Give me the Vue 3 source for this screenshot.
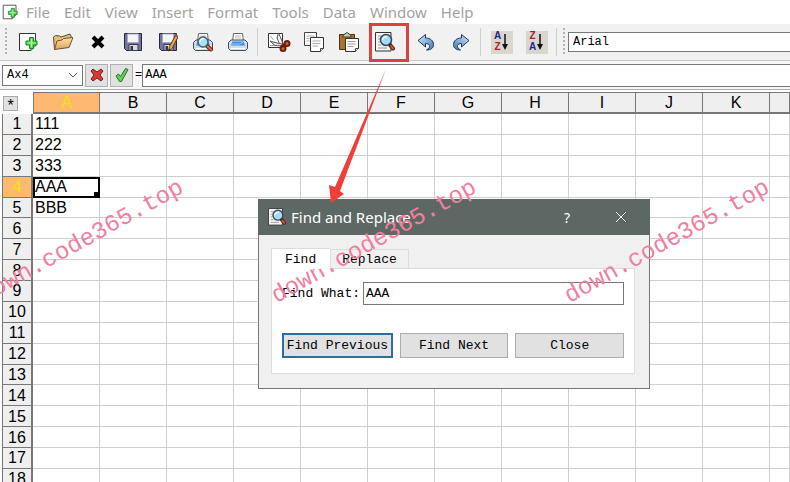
<template>
  <div class="app-window">
    <!-- shared icons -->
    <svg class="icon-defs" aria-hidden="true">
      <defs>
        <linearGradient id="folder-fill" x1="0" y1="0" x2="0" y2="1">
          <stop offset="0" stop-color="#fbe3ae" />
          <stop offset="1" stop-color="#dba558" />
        </linearGradient>
        <linearGradient id="blue-fill" x1="0" y1="0" x2="1" y2="1">
          <stop offset="0" stop-color="#d6e9fa" />
          <stop offset="1" stop-color="#3e78bd" />
        </linearGradient>
      </defs>

      <symbol id="icon-new" viewBox="0 0 20 20">
        <path d="M1.5 1.5h16v12l-4.500 5h-11.500z" fill="#fff" stroke="#333" />
        <path d="M13 18.500v-4.500h4.500" fill="#ddd" stroke="#555" />
        <path d="M11.500 5.500h4v3.500h3.500v4h-3.500v3.500h-4v-3.500h-3.500v-4h3.500z" fill="#5fd45a" stroke="#128a24" />
        <path d="M13.500 7v8M9.500 11h8" stroke="#b5f5a8" />
      </symbol>

      <symbol id="icon-open" viewBox="0 0 20 20">
        <path d="M1.500 17.500l-1-12.500 2-1.500 4 .500 1.500 1 9-3 1 2 .500 3z" fill="#e9bd76" stroke="#5f4a2b" />
        <path d="M1.500 17.500l2.500-8.500 5-1 1.500-1.500 9.500-1-4 10z" fill="url(#folder-fill)" stroke="#6d5430" />
      </symbol>

      <symbol id="icon-delete" viewBox="0 0 20 20">
        <path d="M5 5l10 10M15 5L5 15" stroke="#000" stroke-width="4" />
      </symbol>

      <symbol id="icon-save" viewBox="0 0 20 20">
        <path d="M1.500 1.500h17v17h-15l-2-2z" fill="#74749f" stroke="#26263c" />
        <path d="M4.500 2h11v8.500h-11z" fill="#f4f4fb" stroke="#a9a9c7" />
        <path d="M6 12.500h9v6h-9z" fill="#d7d7e0" stroke="#39394f" />
        <path d="M7.500 14h2.500v4h-2.500z" fill="#33334d" />
      </symbol>

      <symbol id="icon-pencil" viewBox="0 0 20 20">
        <path d="M10.500 19l1-4.500 6-11 2.500 1.500-6 11.500z" fill="#e6a94b" stroke="#5b3a15" />
        <path d="M17 4l1-1.500 2 1-.500 2z" fill="#d8442d" />
        <path d="M10.500 19l.500-2 1.500 1z" fill="#111" />
      </symbol>

      <symbol id="icon-print" viewBox="0 0 20 20">
        <path d="M4.500 10l1-8.500h9l1 8.500z" fill="#fff" stroke="#666" />
        <path d="M7 4h6M7 6h6" stroke="#bbb" />
        <path d="M.500 10.500l2.500-2.500h14l2.500 2.500v6l-2 2h-15l-2-2z" fill="#d5dce7" stroke="#414b5a" />
        <path d="M4.500 9.500h11l1.500 4h-14z" fill="#3d8af0" />
        <path d="M4 12h8l3-2" fill="none" stroke="#9cd0ff" />
        <path d="M3 16.500h14" stroke="#fff" />
      </symbol>

      <symbol id="icon-lens" viewBox="0 0 20 20">
        <path d="M14 14l4 3.500" stroke="#662516" stroke-width="4" stroke-linecap="round" />
        <path d="M14.500 14.500l3.500 3" stroke="#ee6a45" stroke-width="2" stroke-linecap="round" />
        <circle cx="10" cy="10" r="5" fill="#a9e0f3" stroke="#3c6272" stroke-width="1.500" />
        <path d="M7 10a3 3 0 0 1 4-3" fill="none" stroke="#fff" stroke-width="1.500" />
      </symbol>

      <symbol id="icon-find" viewBox="0 0 20 20">
        <path d="M.500 .500h15.500v18.500h-15.500z" fill="#f4f4f4" stroke="#333" />
        <path d="M3 4h3M3 7h2M3 10h2M3 13h3M3 16h9" stroke="#999" />
        <circle cx="11" cy="8" r="5.500" fill="#a5d9f7" stroke="#34495b" stroke-width="1.500" />
        <path d="M7.500 8a3.500 3.500 0 0 1 4.500-3" fill="none" stroke="#fff" stroke-width="1.500" />
        <path d="M15.500 13.500l2.500 3" stroke="#5d2014" stroke-width="4" stroke-linecap="round" />
        <path d="M16 14l2 2.500" stroke="#d5543a" stroke-width="2" stroke-linecap="round" />
      </symbol>

      <symbol id="icon-cut" viewBox="0 0 24 20">
        <path d="M1.500 1.500h14v14h-14z" fill="#fff" stroke="#333" />
        <path d="M3.500 4l3 4M3 13.500h6" stroke="#aaa" />
        <path d="M11.500 1l-1.500 5 3 7 3 1-1-5z" fill="#f6f6f6" stroke="#555" />
        <path d="M3 9l5 4.500 8 .500 1-1.500-7-1.500z" fill="#eee" stroke="#555" />
        <circle cx="20" cy="11.500" r="2.500" fill="#c86a34" stroke="#6e1f0a" stroke-width="2" />
        <circle cx="16" cy="16.500" r="2.500" fill="#c86a34" stroke="#6e1f0a" stroke-width="2" />
        <path d="M15 13l3.500-1M14.500 13.500l1 2" stroke="#6e1f0a" stroke-width="2" />
      </symbol>

      <symbol id="icon-copy" viewBox="0 0 20 20">
        <path d="M.500 .500h12v13h-12z" fill="#fff" stroke="#444" />
        <path d="M2.500 4h8M2.500 6.500h3M2.500 9h3" stroke="#aaa" />
        <path d="M6.500 5.500h13v11l-3 3h-10z" fill="#fff" stroke="#333" />
        <path d="M8.500 9h8M8.500 11.500h8M8.500 14h6" stroke="#aaa" />
        <path d="M16.500 19.500v-3h3" fill="#ddd" stroke="#444" />
      </symbol>

      <symbol id="icon-paste" viewBox="0 0 20 20">
        <path d="M.500 2.500h15v15h-15z" fill="#a8742c" stroke="#4b3111" />
        <path d="M3.500 5l1.500-2.500 3-2 3 2 1.500 2.500z" fill="#c9c9a8" stroke="#45452f" />
        <path d="M6.500 6.500h13v10l-3 3h-10z" fill="#fff" stroke="#333" />
        <path d="M8.500 9.500h8M8.500 12h8M8.500 14.500h6" stroke="#999" />
        <path d="M16.500 19.500v-3h3" fill="#ddd" stroke="#444" />
      </symbol>

      <symbol id="icon-undo" viewBox="0 0 20 20">
        <path d="M2 8.500l7.500-6v3.500c5 0 8 3 8 6.500 0 3.500-2.500 5.500-7 5.500 2.500-1.500 3.500-3 3-4.500-.500-1.500-2-2-4-2v3.500z" fill="url(#blue-fill)" stroke="#22384f" stroke-linejoin="round" />
      </symbol>

      <symbol id="icon-sort" viewBox="0 0 8 18">
        <path d="M4 1v13" stroke="#111" stroke-width="1.500" />
        <path d="M1 11h6l-3 6z" fill="#111" />
      </symbol>
    </svg>

    <!-- menu -->
    <nav class="menu-bar">
      <svg class="menu-logo"><use href="#icon-new" /></svg>
      <a v-for="item in menus" :key="item" href="#" @click.prevent>{{ item }}</a>
    </nav>

    <!-- toolbar -->
    <div class="toolbar">
      <span class="grip"></span>
      <div class="tool-group">
        <button v-for="tool in fileTools" :key="tool.label" :aria-label="tool.label" class="tool">
          <svg v-for="icon in tool.icons" :key="icon" class="tool-icon"><use :href="`#icon-${icon}`" /></svg>
        </button>
      </div>
      <span class="separator"></span>
      <div class="tool-group">
        <button v-for="tool in editTools" :key="tool.label" :aria-label="tool.label" class="tool">
          <svg class="tool-icon" :class="{ wide: tool.icon === 'cut' }"><use :href="`#icon-${tool.icon}`" /></svg>
        </button>
        <button class="tool find-tool" aria-label="Find" @click="dialogOpen = true">
          <svg class="tool-icon"><use href="#icon-find" /></svg>
        </button>
        <button class="tool" aria-label="Undo">
          <svg class="tool-icon"><use href="#icon-undo" /></svg>
        </button>
        <button class="tool" aria-label="Redo">
          <svg class="tool-icon mirrored"><use href="#icon-undo" /></svg>
        </button>
      </div>
      <span class="separator"></span>
      <div class="tool-group">
        <button v-for="order in ['AZ', 'ZA']" :key="order" class="tool" :aria-label="`Sort ${order}`">
          <span class="sort-face">
            <span class="sort-letters">
              <b v-for="letter in order" :key="letter" :class="letter === 'A' ? 'blue' : 'red'">{{ letter }}</b>
            </span>
            <svg class="sort-arrow"><use href="#icon-sort" /></svg>
          </span>
        </button>
      </div>
      <span class="separator"></span>
      <span class="grip"></span>
      <select class="font-select" aria-label="Font">
        <option>Arial</option>
      </select>
    </div>

    <!-- formula bar -->
    <div class="formula-bar">
      <div class="name-box">
        <select aria-label="Cell">
          <option>Ax4</option>
        </select>
        <svg class="chevron" viewBox="0 0 10 6"><path d="M1 1l4 4 4-4" fill="none" stroke="#555" /></svg>
      </div>
      <button class="formula-button" aria-label="Cancel">
        <svg viewBox="0 0 14 14"><path d="M3 1l4 3 4-3 2 2-3 4 3 4-2 2-4-3-4 3-2-2 3-4-3-4z" fill="#d63b33" stroke="#7c1a16" /></svg>
      </button>
      <button class="formula-button" aria-label="Accept">
        <svg viewBox="0 0 14 14"><path d="M1 8l2.500-2 2 2.500 5-8 2.500 1-6.500 12h-2z" fill="#62d058" stroke="#217a27" /></svg>
      </button>
      <label for="formula">=</label>
      <input id="formula" v-model="formula" type="text" />
    </div>

    <!-- sheet -->
    <div class="sheet-wrap">
      <table class="sheet">
        <colgroup>
          <col class="row-col" />
          <col v-for="col in columns" :key="col" class="data-col" />
          <col />
        </colgroup>
        <thead>
          <tr>
            <td class="corner"><button aria-label="Select all">*</button></td>
            <th v-for="col in columns" :key="col" scope="col" :class="{ active: col === 'A' }">{{ col }}</th>
            <th></th>
          </tr>
        </thead>
        <tbody>
          <tr v-for="row in 18" :key="row">
            <th scope="row" :class="{ active: row === 4 }">{{ row }}</th>
            <td v-for="col in columns" :key="col" :class="{ selected: row === 4 && col === 'A' }">{{ col === 'A' ? cells[row - 1] : '' }}</td>
            <td></td>
          </tr>
        </tbody>
      </table>
    </div>

    <!-- find dialog -->
    <section v-if="dialogOpen" class="dialog" role="dialog" aria-labelledby="dialog-title">
      <header class="dialog-title">
        <svg class="title-icon"><use href="#icon-find" /></svg>
        <h1 id="dialog-title">Find and Replace</h1>
        <button class="title-button" aria-label="Help">?</button>
        <button class="title-button" aria-label="Close window" @click="dialogOpen = false">
          <svg viewBox="0 0 12 12"><path d="M1 1l10 10M11 1L1 11" stroke="#fff" /></svg>
        </button>
      </header>
      <div class="dialog-body">
        <div class="tabs" role="tablist">
          <button class="tab current" role="tab" aria-selected="true">Find</button>
          <button class="tab" role="tab" aria-selected="false">Replace</button>
        </div>
        <div class="tab-panel">
          <div class="field">
            <label for="find-what">Find What:</label>
            <input id="find-what" v-model="findWhat" type="text" />
          </div>
          <div class="actions">
            <button class="default">Find Previous</button>
            <button>Find Next</button>
            <button @click="dialogOpen = false">Close</button>
          </div>
        </div>
      </div>
    </section>

    <!-- pointer from the toolbar button to the dialog -->
    <svg class="pointer" viewBox="0 0 60 136" aria-hidden="true">
      <path d="M57 1L6 119l-6-2 2 18 13-9-4-3z" fill="#ee3f3b" />
    </svg>

    <div class="watermarks" aria-hidden="true">
      <span v-for="n in 3" :key="n">down.code365.top</span>
    </div>
  </div>
</template>

<script setup>
import { ref } from 'vue';

const menus = ['File', 'Edit', 'View', 'Insert', 'Format', 'Tools', 'Data', 'Window', 'Help'];

const fileTools = [
  { label: 'New', icons: ['new'] },
  { label: 'Open', icons: ['open'] },
  { label: 'Delete', icons: ['delete'] },
  { label: 'Save', icons: ['save'] },
  { label: 'Save as', icons: ['save', 'pencil'] },
  { label: 'Print preview', icons: ['print', 'lens'] },
  { label: 'Print', icons: ['print'] }
];

const editTools = [
  { label: 'Cut', icon: 'cut' },
  { label: 'Copy', icon: 'copy' },
  { label: 'Paste', icon: 'paste' }
];

const columns = 'ABCDEFGHIJK'.split('');
const cells = ['111', '222', '333', 'AAA', 'BBB'];

const formula = ref('AAA');
const findWhat = ref('AAA');
const dialogOpen = ref(true);
</script>

<style>
body {
  background: #fff;
  overflow: hidden;
}
</style>

<style scoped>
.app-window {
  position: relative;
  height: 100vh;
  overflow: hidden;
  display: flex;
  flex-direction: column;
  background: #fff;
  font-family: "Liberation Mono", monospace;
  font-size: 12px;
  color: #000;
}

.app-window * {
  box-sizing: border-box;
}

button,
input,
select {
  margin: 0;
  padding: 0;
  border: 0;
  border-radius: 0;
  background: none;
  color: inherit;
  font: inherit;
  outline: none;
}

select {
  appearance: none;
}

.icon-defs {
  position: absolute;
  width: 0;
  height: 0;
}

/* menu */
.menu-bar {
  flex: none;
  display: flex;
  align-items: center;
  gap: 14px;
  height: 24px;
  padding-left: 2px;
  font-family: "Noto Sans", sans-serif;
  font-size: 15px;
}

.menu-logo {
  width: 16px;
  height: 18px;
  margin-right: -6px;
}

.menu-bar a {
  color: #a2a2a2;
  text-decoration: none;
}

/* toolbar */
.toolbar {
  flex: none;
  display: flex;
  align-items: center;
  height: 37px;
  padding-left: 2px;
  background: #f1f1f1;
  border-bottom: 1px solid #c6c6c6;
}

.tool-group {
  display: flex;
}

.tool {
  position: relative;
  display: grid;
  place-items: center;
  width: 35px;
  height: 36px;
}

.find-tool {
  width: 40px;
  margin: 0 -1px 0 3px;
  padding-right: 8px;
}

/* red frame round the find button */
.find-tool::after {
  content: "";
  position: absolute;
  inset: -1px 0 -2px 0;
  border: 3px solid #df4141;
}

.tool-icon {
  grid-area: 1 / 1;
  width: 20px;
  height: 20px;
}

.tool-icon.wide {
  width: 24px;
}

.tool-icon.mirrored {
  transform: scaleX(-1);
}

.grip {
  width: 2px;
  height: 28px;
  margin: 0 3px;
  background: repeating-linear-gradient(#b5b5b5 0 2px, #f1f1f1 2px 4px);
}

.separator {
  width: 1px;
  height: 28px;
  margin: 0 3px 0 2px;
  background: #d0d0d0;
}

.sort-face {
  display: flex;
  align-items: center;
  justify-content: center;
  width: 22px;
  height: 23px;
  background: #d9d6d0;
}

.sort-letters {
  display: flex;
  flex-direction: column;
  font-family: "Liberation Sans", sans-serif;
  font-size: 10px;
  line-height: 10px;
}

.sort-letters b {
  height: 11px;
}

.sort-letters .blue {
  color: #23238e;
}

.sort-letters .red {
  color: #a82424;
}

.sort-arrow {
  width: 8px;
  height: 18px;
}

.font-select {
  flex: 1;
  height: 20px;
  padding-left: 4px;
  background: #fff;
  border: 1px solid #777;
  border-right: 0;
}

/* formula bar */
.formula-bar {
  flex: none;
  display: flex;
  align-items: center;
  gap: 2px;
  height: 29px;
  padding: 3px 0 3px 2px;
  background: #f7f7f7;
  border-bottom: 1px solid #aaa;
}

.name-box {
  position: relative;
  width: 81px;
  height: 21px;
}

.name-box select {
  width: 100%;
  height: 100%;
  padding-left: 4px;
  background: #fff;
  border: 1px solid #777;
}

.chevron {
  position: absolute;
  top: 7px;
  right: 5px;
  width: 10px;
  height: 6px;
  pointer-events: none;
}

.formula-button {
  display: grid;
  place-items: center;
  width: 23px;
  height: 23px;
  background: #e1e1e1;
  border: 1px solid #b0b0b0;
}

.formula-button svg {
  width: 14px;
  height: 14px;
}

.formula-bar input {
  flex: 1;
  height: 23px;
  margin-left: -2px;
  padding-left: 2px;
  background: #fff;
  border: 1px solid #777;
  border-right: 0;
}

/* sheet */
.sheet-wrap {
  flex: 1;
  min-height: 0;
  overflow: hidden;
  padding: 2px 0 0 2px;
}

.sheet {
  width: 100%;
  height: 398px;
  table-layout: fixed;
  border-collapse: separate;
  border-spacing: 0;
  font-family: "Liberation Sans", sans-serif;
  font-size: 16px;
  line-height: 18px;
}

.row-col {
  width: 31px;
}

.data-col {
  width: 67px;
}

.sheet thead tr {
  height: 22px;
}

.sheet th,
.sheet td {
  padding: 0;
  overflow: hidden;
}

.sheet th {
  background: #efefef;
  border-right: 1px solid #777;
  border-bottom: 1px solid #777;
  font-weight: 400;
}

.sheet thead th {
  border-top: 1px solid #777;
  border-bottom-width: 2px;
}

.sheet thead th:nth-child(2) {
  border-left: 1px solid #777;
}

.sheet tbody th {
  padding-top: 1px;
  border-left: 1px solid #777;
  border-right-width: 2px;
}

.sheet th.active {
  background: #fdb970;
  color: #f2e40c;
}

.sheet tbody td {
  padding: 1px 0 0 2px;
  border-right: 1px solid #cfcfcf;
  border-bottom: 1px solid #cfcfcf;
}

.sheet tbody td.selected {
  position: relative;
  border-color: #000;
  box-shadow: inset 2px 2px #000, inset -1px -1px #000;
}

/* fill handle */
.sheet td.selected::after {
  content: "";
  position: absolute;
  right: 0;
  bottom: 0;
  width: 5px;
  height: 5px;
  background: #000;
}

.corner button {
  display: block;
  width: 15px;
  height: 15px;
  margin-left: 1px;
  background: #e1e1e1;
  border: 1px solid #aaa;
  font-size: 16px;
  line-height: 18px;
}

/* dialog */
.dialog {
  position: absolute;
  top: 199px;
  left: 258px;
  width: 392px;
  background: #f0f0f0;
  border: 1px solid #777;
  font-size: 13px;
}

.dialog-title {
  display: flex;
  align-items: center;
  height: 36px;
  margin: -1px -1px 0;
  padding: 0 2px 0 10px;
  background: #5d6865;
  color: #fff;
  font-family: "Noto Sans", sans-serif;
}

.title-icon {
  width: 18px;
  height: 18px;
}

.dialog-title h1 {
  flex: 1;
  margin: 0 0 0 5px;
  font-size: 15px;
  font-weight: 400;
}

.title-button {
  width: 54px;
  height: 36px;
  font-size: 14px;
}

.title-button svg {
  display: block;
  width: 12px;
  height: 12px;
  margin: 0 auto;
}

.dialog-body {
  padding: 13px 14px 14px 12px;
}

.tabs {
  display: flex;
  align-items: flex-end;
}

.tab {
  height: 19px;
  padding: 0 11px;
  border: 1px solid #dcdcdc;
  border-bottom: 0;
}

.tab.current {
  z-index: 1;
  height: 21px;
  margin-bottom: -1px;
  padding: 0 14px 0 13px;
  background: #fff;
  border-right: 0;
}

.tab-panel {
  padding: 13px 10px 15px;
  background: #fff;
  border: 1px solid #dcdcdc;
}

.field {
  display: flex;
  align-items: center;
  gap: 3px;
}

.field input {
  flex: 1;
  min-width: 0;
  height: 23px;
  padding-left: 2px;
  border: 1px solid #777;
}

.actions {
  display: flex;
  gap: 7px;
  margin-top: 28px;
}

.actions button {
  flex: 1;
  min-width: 0;
  height: 25px;
  background: #e1e1e1;
  border: 1px solid #adadad;
  white-space: nowrap;
}

.actions .default {
  border: 2px solid #2b6f9f;
}

/* overlays */
.pointer {
  position: absolute;
  top: 68px;
  left: 329px;
  width: 60px;
  height: 136px;
  pointer-events: none;
}

.watermarks {
  position: absolute;
  top: 228px;
  left: -34px;
  display: flex;
  gap: 62px;
  pointer-events: none;
}

.watermarks span {
  width: 231px;
  color: #f07f9f;
  font-size: 24px;
  line-height: 28px;
  transform: rotate(-29deg);
}
</style>
